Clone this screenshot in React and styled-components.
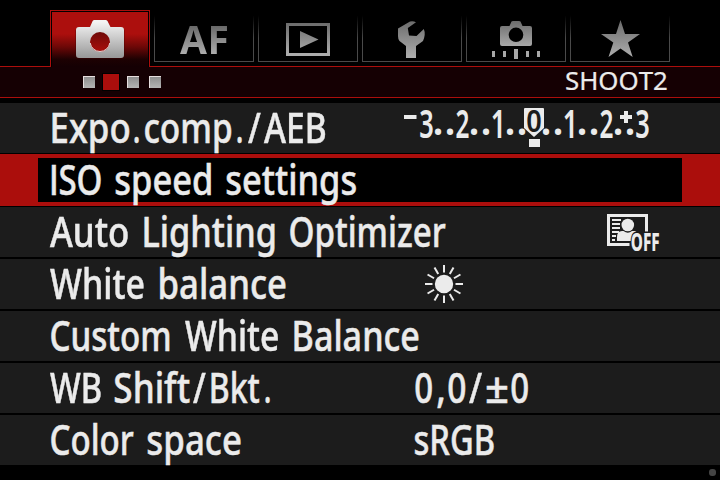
import React, { useLayoutEffect, useState } from "react";
import styled, { createGlobalStyle, css } from "styled-components";

const INK = "#ebebeb";
const RED = "#ab0e0c";
const PANEL = "#1c1c1c";
const FACE = '"Noto Sans", "Open Sans", sans-serif';

const GlobalStyle = createGlobalStyle`
  html, body { margin: 0; background: #000; }
  * { box-sizing: border-box; }
`;

const Screen = styled.main`
  width: 720px;
  height: 480px;
  display: flex;
  flex-direction: column;
  overflow: hidden;
  background: #000;
  color: ${INK};
  font-family: ${FACE};
`;

const TabBar = styled.nav`
  display: flex;
  gap: 4px;
  height: 67px;
  flex: none;
  padding: 10px 50px 0;
  border-bottom: 1px solid ${RED};
`;

const Tab = styled.div`
  width: 100px;
  flex: none;
  height: 52px;
  border: solid #4a4a4a;
  border-width: 0 1px 1px;
  border-image: linear-gradient(to bottom, #000 12%, #4a4a4a 55%) 1;
  svg { display: block; margin-left: -1px; }

  ${({ $active }) => $active && css`
    height: 57px;
    border: 1px solid ${RED};
    border-bottom: 0;
    border-image: none;
    padding: 1px 1px 0;
    background: linear-gradient(#ac0f0d 0 40%, #6e0807 63%, #1d0102 86%, #140003 100%) content-box, #000;
    svg { margin: -2px 0 0 -2px; }
  `}
`;

const AfMark = styled.div`
  padding: 2px 0 0 25px;
  font-size: 39px;
  font-weight: 700;
  letter-spacing: 0.5px;
  line-height: 53px;
  color: transparent;
  background: linear-gradient(#6a6a6a 30%, #b4b4b4 85%);
  background-clip: text;
  -webkit-background-clip: text;
`;

const PageBar = styled.div`
  display: flex;
  align-items: center;
  height: 31px;
  flex: none;
  padding-left: 83px;
  background: #150003;
  border-bottom: 1px solid ${RED};
`;

const PageMark = styled.i`
  width: 12px;
  height: 12px;
  margin-right: 10px;
  background: linear-gradient(#8e8e8e, #b5b5b5);
  border: solid #e6dede;
  border-width: 1px 0 0 1px;

  ${({ $active }) => $active && css`
    width: 16px;
    height: 16px;
    margin: 0 8px 0 -2px;
    background: ${RED};
    border: 0;
    box-shadow: 0 0 0 1px #000;
  `}
`;

const PageTitle = styled.div`
  margin-left: 395px;
  height: 30px;
`;

const Menu = styled.section`
  display: flex;
  flex-direction: column;
  gap: 2px;
  padding-top: 5px;
`;

const Row = styled.div`
  display: flex;
  height: 50px;
  flex: none;
  background: ${PANEL};
  ${({ $selected }) => $selected && css`
    height: 52px;
    margin: -1px 0;
    padding: 4px 38px;
    background: ${RED};
  `}
`;

const RowBody = styled.div`
  display: flex;
  flex: 1;
  padding-left: ${({ $selected }) => ($selected ? 0 : 38)}px;
  background: ${({ $selected }) => ($selected ? "#000" : "transparent")};
`;

const LabelCell = styled.div`
  width: 362px;
  flex: none;
  display: flex;
  height: 50px;
  margin-top: ${({ $selected }) => ($selected ? -3 : 0)}px;
`;

const ValueCell = styled.div`
  display: flex;
  height: 50px;
  svg { display: block; overflow: visible; }
`;

const WordBox = styled.span`
  display: block;
  flex: none;
  width: ${({ $w }) => $w}px;
  margin-left: ${({ $gap }) => $gap}px;
  white-space: pre;
`;

const Glyphs = styled.span`
  display: inline-block;
  transform-origin: 0 0;
  font: ${({ $weight }) => $weight} ${({ $size }) => $size}px/${({ $lh }) => $lh}px ${({ $face }) => $face};
  font-kerning: none;
  -webkit-text-stroke: ${({ $size }) => ($size > 30 ? 0.5 : 0.2)}px ${INK};
`;

const Footer = styled.footer`
  display: flex;
  justify-content: flex-end;
  padding: 4px 4px 0 0;
`;

const Lamp = styled.i`
  width: 7px;
  height: 7px;
  border-radius: 3px;
  background: #444;
`;

// Horizontal scale and offset that make a run's ink span exactly `w` pixels.
function useInkFit(text, w, size, weight, face) {
  const [fit, setFit] = useState({ scale: 1, left: 0 });
  useLayoutEffect(() => {
    const ctx = document.createElement("canvas").getContext("2d");
    ctx.font = `${weight} ${size}px ${face}`;
    ctx.fontKerning = "none";
    const m = ctx.measureText(text.trim());
    setFit({
      scale: w / (m.actualBoundingBoxRight + m.actualBoundingBoxLeft),
      left: m.actualBoundingBoxLeft,
    });
  }, [text, w, size, weight, face]);
  return fit;
}

function Word({ text, w, gap = 0, size = 42, weight = 500, lh = 48, face = FACE }) {
  const fit = useInkFit(text, w, size, weight, face);
  return (
    <WordBox $w={w} $gap={gap}>
      <Glyphs
        $size={size}
        $weight={weight}
        $lh={lh}
        $face={face}
        style={{ transform: `scaleX(${fit.scale}) translateX(${fit.left}px)` }}
      >
        {text}
      </Glyphs>
    </WordBox>
  );
}

// Each word is [text, ink start, ink end, optional face]; origin is the cell's left edge.
function Words({ items, origin }) {
  let cursor = origin;
  return items.map(([text, from, to, face], i) => {
    const gap = from - cursor;
    cursor = to;
    return <Word key={i} text={text} gap={gap} w={to - from} face={face} />;
  });
}

const Grey = ({ id, top = "#6c6c6c", bottom = "#adadad", y1 = 21, y2 = 57 }) => (
  <linearGradient id={id} gradientUnits="userSpaceOnUse" x1="0" x2="0" y1={y1} y2={y2}>
    <stop offset="0" stopColor={top} />
    <stop offset="1" stopColor={bottom} />
  </linearGradient>
);

const TabIcon = ({ x, children }) => (
  <svg width="100" height="52" viewBox={`${x} 10 100 52`}>{children}</svg>
);

const ShootIcon = () => (
  <TabIcon x={50}>
    <defs>
      <Grey id="g1" top="#f4f4f4" bottom="#999" y1={22} />
      <Grey id="lens" top="#6e0908" bottom="#a50d0b" y1={32} y2={50} />
    </defs>
    <path d="M79 28H90L93 20.500Q93.500 20 94.500 20H106Q107 20 107.500 21L110.500 28H121Q124.500 28 124.500 31V55.500Q124.500 59 121 59H79Q75.500 59 75.500 55.500V31Q75.500 28 79 28Z" fill="#300" opacity=".55" />
    <path fill="url(#g1)" d="M79 27H90L92.600 21Q93 20 94.500 20H105.500Q107 20 107.500 21L110.500 27H121Q124 27 124 30V55Q124 58 121 58H79Q76 58 76 55V30Q76 27 79 27Z" />
    <circle cx="100" cy="42" r="10" fill="url(#lens)" />
    <path d="M90.200 43A9.900 9.900 0 0 0 109.800 43" fill="none" stroke="#e2d9d9" strokeWidth="1" />
  </TabIcon>
);

const PlayIcon = () => (
  <TabIcon x={258}>
    <defs><Grey id="g2" y1={23} y2={54} /></defs>
    <rect x="287.500" y="24.500" width="41" height="30" fill="none" stroke="url(#g2)" strokeWidth="3" />
    <path d="M300 31L318.500 39.500L300 48Z" fill="url(#g2)" />
  </TabIcon>
);

const WrenchIcon = () => (
  <TabIcon x={362}>
    <defs><Grey id="g3" /></defs>
    <path fill="url(#g3)" d="M398 28.500L410 21.500Q413 20.500 416 22.300L407.800 28L409 35.500L416.500 36L423.800 29Q426 34 423 41L416 46V58H406V46L399.500 41Q398 39.500 398 36Z" />
  </TabIcon>
);

const CustomIcon = () => (
  <TabIcon x={466}>
    <defs><Grey id="g4" y2={48} /></defs>
    <path fillRule="evenodd" fill="url(#g4)" d="M502 26H509.500L511.500 21.500Q512 21 513 21H519Q520 21 520.500 21.500L522.500 26H530Q532 26 532 28V44Q532 46 530 46H502Q500 46 500 44V28Q500 26 502 26ZM516 27.500A7.300 7.300 0 1 0 516 42.100A7.300 7.300 0 1 0 516 27.500Z" />
    <path fill="#a8a8a8" d="M492 51h3v6h-3zM503 51h3v6h-3zM514 49h4v10h-4zM526 51h3v6h-3zM537 51h3v6h-3z" />
  </TabIcon>
);

const StarIcon = () => (
  <TabIcon x={570}>
    <defs><Grey id="g5" /></defs>
    <path fill="url(#g5)" d="M620.500 20L625 34H640L628 42.500L632.700 57L620.500 48.500L608.500 57L613.300 42.500L601 34H616Z" />
  </TabIcon>
);

const ScaleText = styled.text`
  font: ${({ $weight }) => $weight} ${({ $size }) => $size}px ${FACE};
`;

function Char({ children, x, w, y = 137.5, size = 39, weight = 600, fill = INK, ...rest }) {
  const fit = useInkFit(children, w, size, weight, FACE);
  return (
    <ScaleText
      $size={size}
      $weight={weight}
      fill={fill}
      transform={`translate(${x + fit.left * fit.scale} ${y}) scale(${fit.scale} 1)`}
      {...rest}
    >
      {children}
    </ScaleText>
  );
}

const Dots = ({ x }) => (
  <>
    <Char x={x - 3.2} w={6.4} y={134.6} weight={700}>.</Char>
    <Char x={x + 8.8} w={6.4} y={134.6} weight={700}>.</Char>
  </>
);

const ExposureScale = () => (
  <svg width="300" height="50" viewBox="400 103 300 50">
    <path fill={INK} d="M404 115h12.500v4h-12.500zM620 115h4v-4h4v4h4v4h-4v4h-4v-4h-4zM529 139h11v8h-11z" />
    <Char x={420} w={13}>3</Char><Dots x={438} />
    <Char x={456} w={12.5}>2</Char><Dots x={474} />
    <Char x={492} w={9.5}>1</Char><Dots x={510} />
    <path fill={INK} d="M525 108H543Q544 108 544 109V128L534 137L524 128V109Q524 108 525 108Z" />
    <Char x={527} w={14} y={132} size={31} weight={600} fill={PANEL}>0</Char>
    <Dots x={546} />
    <Char x={564} w={9.5}>1</Char><Dots x={582} />
    <Char x={600} w={12.5}>2</Char><Dots x={618} />
    <Char x={636} w={13}>3</Char>
  </svg>
);

const OptimizerIcon = () => (
  <svg width="300" height="50" viewBox="400 207 300 50">
    <path d="M629.500 244.500H608.500V215.500H646.500V232" fill="none" stroke={INK} strokeWidth="3" />
    <path d="M612 220H621M612 224H620M612 228H620M612 232H619M612 236H616M612 240H615" stroke={INK} strokeWidth="2" />
    <circle cx="627.800" cy="225" r="6.300" fill={INK} />
    <path d="M617 241V237Q617 231 622 231L623.500 231Q628 234.500 632 231H635Q636 231 637 233L631 241Z" fill={INK} />
    <Char x={631.5} w={27.5} y={251} size={24} weight={800} stroke={PANEL} strokeWidth="3" paintOrder="stroke">OFF</Char>
  </svg>
);

const SunIcon = () => (
  <svg width="300" height="50" viewBox="400 259 300 50">
    <circle cx="444" cy="284" r="9.200" fill={INK} />
    {Array.from({ length: 12 }, (_, i) => (
      <path key={i} d="M444 272.500V265" stroke={INK} strokeWidth="2" transform={`rotate(${i * 30} 444 284)`} />
    ))}
  </svg>
);

const OPEN = '"Open Sans", sans-serif';
const ROWS = [
  {
    label: [["Expo", 52, 129.3], [".", 134, 138.7], ["comp", 145, 231], [".", 236.7, 241.4], ["/", 248.3, 261], ["AEB", 264.5, 326]],
    value: <ExposureScale />,
  },
  { label: [["I", 52, 56, OPEN], ["SO ", 60, 101], ["speed ", 116, 211], ["settings", 227, 356]], selected: true },
  { label: [["Auto ", 50, 128], ["Lighting ", 144, 274.5], ["Optimizer", 290, 446]], value: <OptimizerIcon /> },
  { label: [["White ", 50, 144], ["balance", 160, 286]], value: <SunIcon /> },
  { label: [["Custom ", 51, 169.5], ["White ", 184.5, 278], ["Balance", 294, 419]] },
  {
    label: [["WB ", 50, 101], ["Shift", 115, 190], ["/", 193, 205.7], ["Bkt", 211.3, 260], [".", 265, 269.7]],
    value: <Words origin={400} items={[["0", 415, 432.3], [",", 437.3, 444], ["0", 447.7, 465.3], ["/", 469, 482], ["±", 487, 507], ["0", 511, 528.3]]} />,
  },
  { label: [["Color ", 51, 134], ["space", 148, 241]], value: <Words origin={400} items={[["sRGB", 415, 494]]} /> },
];

export default function App() {
  return (
    <Screen>
      <GlobalStyle />
      <TabBar>
        <Tab $active><ShootIcon /></Tab>
        <Tab><AfMark>AF</AfMark></Tab>
        <Tab><PlayIcon /></Tab>
        <Tab><WrenchIcon /></Tab>
        <Tab><CustomIcon /></Tab>
        <Tab><StarIcon /></Tab>
      </TabBar>
      <PageBar>
        <PageMark />
        <PageMark $active />
        <PageMark />
        <PageMark />
        <PageTitle><Word text="SHOOT2" w={100.5} size={25} lh={27} weight={400} /></PageTitle>
      </PageBar>
      <Menu>
        {ROWS.map(({ label, value, selected }, i) => (
          <Row key={i} $selected={selected}>
            <RowBody $selected={selected}>
              <LabelCell $selected={selected}><Words items={label} origin={38} /></LabelCell>
              <ValueCell>{value}</ValueCell>
            </RowBody>
          </Row>
        ))}
      </Menu>
      <Footer><Lamp /></Footer>
    </Screen>
  );
}
